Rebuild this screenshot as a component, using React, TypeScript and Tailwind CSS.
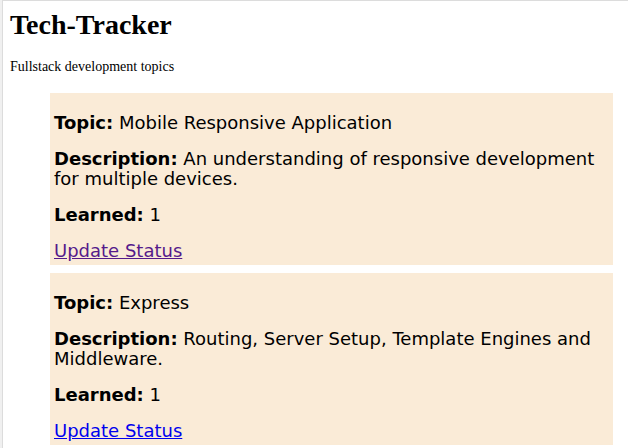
type Topic = {
  name: string;
  description: string;
  learned: number;
  visited: boolean;
};

const topics: Topic[] = [
  {
    name: "Mobile Responsive Application",
    description: "An understanding of responsive development for multiple devices.",
    learned: 1,
    visited: true,
  },
  {
    name: "Express",
    description: "Routing, Server Setup, Template Engines and Middleware.",
    learned: 1,
    visited: false,
  },
];

function TopicCard({ topic }: { topic: Topic }) {
  return (
    <li className="flex flex-col gap-4 bg-[#faebd7] px-1 pt-5 pb-1 font-['DejaVu_Sans',Verdana,sans-serif] text-lg leading-5">
      <p>
        <b>Topic:</b> {topic.name}
      </p>
      <p>
        <b>Description:</b> {topic.description}
      </p>
      <p>
        <b>Learned:</b> {topic.learned}
      </p>
      <a
        href="#update"
        className={topic.visited ? "self-start text-[#551a8b] underline" : "self-start text-[#0000ee] underline"}
      >
        Update Status
      </a>
    </li>
  );
}

export default function App() {
  return (
    <div className="min-h-screen bg-[#f0f0f0] pl-0.5">
      <main className="min-h-screen border-t border-l border-[#dcdcdc] bg-white pt-1 pr-[15px] pb-1 pl-[7px] font-['Liberation_Serif','Times_New_Roman',serif] text-black">
        <h1 className="text-[28px] leading-10 font-bold">Tech-Tracker</h1>
        <p className="mt-3.5 text-sm leading-4">Fullstack development topics</p>
        <ul className="mt-[18px] ml-10 flex flex-col gap-2">
          {topics.map((topic) => (
            <TopicCard key={topic.name} topic={topic} />
          ))}
        </ul>
      </main>
    </div>
  );
}
